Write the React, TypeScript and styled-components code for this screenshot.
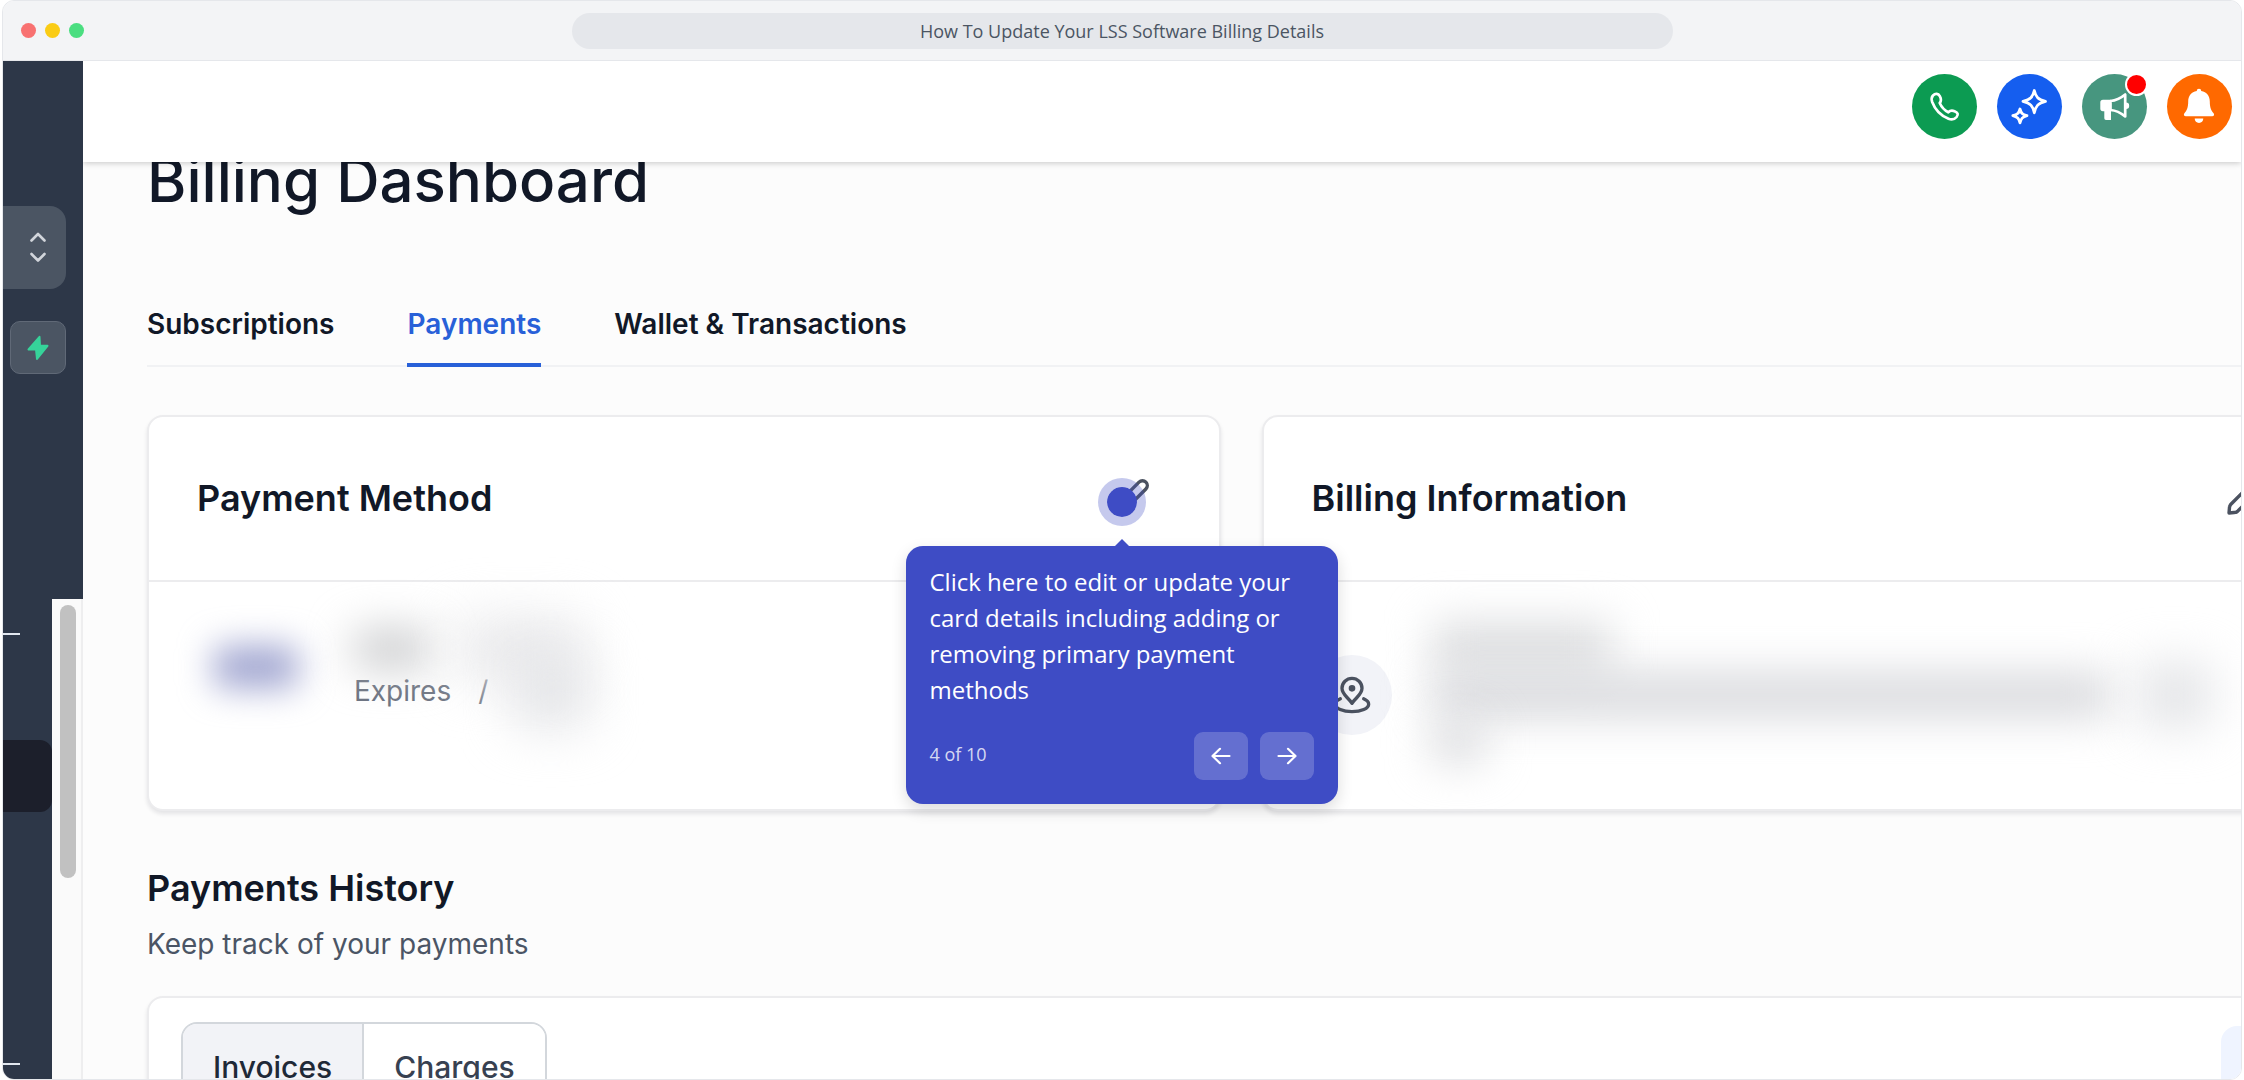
import React from "react";
import styled, { createGlobalStyle } from "styled-components";

const GlobalStyle = createGlobalStyle`
  *, *::before, *::after { box-sizing: border-box; }
  body { margin: 0; background: #ffffff; }
  button { font: inherit; color: inherit; padding: 0; border: 0; background: none; cursor: pointer; }
  h1, h2, p { margin: 0; }
  svg { display: block; flex: none; }
`;

const inter = `Inter, "Liberation Sans", sans-serif`;
const openSans = `"Open Sans", "Noto Sans", sans-serif`;

/* ---------- browser frame ---------- */

const Frame = styled.div`
  display: flex;
  flex-direction: column;
  height: 100vh;
  margin: 0 2px;
  border: 1px solid #e5e7eb;
  border-radius: 12px;
  overflow: hidden;
  background: #fcfcfc;
  color: #111827;
  font-family: ${inter};
`;

const TitleBar = styled.header`
  display: grid;
  grid-template-columns: 1fr 2fr 1fr;
  align-items: center;
  flex: none;
  height: 60px;
  padding: 0 18px;
  background: #f3f4f6;
  border-bottom: 1px solid #e5e7eb;
`;

const Dots = styled.div`
  display: flex;
  gap: 9px;
`;

const Dot = styled.span<{ $color: string }>`
  width: 15px;
  height: 15px;
  border-radius: 50%;
  background: ${(p) => p.$color};
`;

const AddressPill = styled.div`
  height: 36px;
  border-radius: 18px;
  background: #e5e7eb;
  color: #4b5563;
  font: 400 18px/36px ${openSans};
  text-align: center;
`;

const Body = styled.div`
  display: flex;
  flex: 1;
  min-height: 0;
`;

/* ---------- sidebar ---------- */

const Sidebar = styled.aside`
  display: flex;
  flex-direction: column;
  flex: none;
  width: 80px;
  background: #2d3748;
`;

const SidebarTop = styled.div`
  display: flex;
  flex-direction: column;
  flex: none;
  align-items: flex-start;
  gap: 32px;
  height: 538px;
  padding-top: 145px;
`;

const AccountSwitcher = styled.button`
  display: flex;
  justify-content: flex-end;
  align-items: center;
  width: 63px;
  height: 83px;
  padding-right: 20px;
  border-radius: 0 16px 16px 0;
  background: #4b5563;
`;

const QuickAction = styled.button`
  display: grid;
  place-items: center;
  width: 56px;
  height: 53px;
  margin-left: 7px;
  border: 1px solid #606977;
  border-radius: 10px;
  background: #4b5563;
`;

const SidebarScroll = styled.div`
  display: flex;
  flex: 1;
  min-height: 0;
`;

const SidebarNav = styled.nav`
  flex: 1;
  padding-top: 34px;
  overflow: hidden;
`;

const Separator = styled.hr`
  width: 17px;
  height: 2px;
  margin: 0;
  border: 0;
  background: #e2e8f0;
`;

const ActiveItem = styled.a`
  display: block;
  height: 72px;
  margin: 105px 0 251px;
  border-radius: 0 12px 12px 0;
  background: #1c1f2b;
`;

const ScrollTrack = styled.div`
  flex: none;
  width: 31px;
  padding: 6px 0 0 8px;
  background: #fafafa;
  border-right: 2px solid #eeeeef;
`;

const ScrollThumb = styled.div`
  width: 16px;
  height: 273px;
  border-radius: 8px;
  background: #c1c1c1;
`;

/* ---------- main column ---------- */

const Main = styled.main`
  display: flex;
  flex-direction: column;
  flex: 1;
  min-width: 0;
  overflow: hidden;
`;

const TopBar = styled.div`
  position: relative;
  z-index: 1;
  display: flex;
  flex: none;
  justify-content: flex-end;
  gap: 20px;
  height: 101px;
  padding: 13px 9px 0;
  background: #ffffff;
  box-shadow: 0 1px 6px rgba(0, 0, 0, 0.22);
`;

const RoundButton = styled.button<{ $color: string }>`
  position: relative;
  width: 65px;
  height: 65px;
  border-radius: 50%;
  background: ${(p) => p.$color};
`;

const Badge = styled.span`
  position: absolute;
  top: -1px;
  right: -1px;
  width: 23px;
  height: 23px;
  border: 2px solid #ffffff;
  border-radius: 50%;
  background: #ff0000;
`;

/* The dashboard runs past the right edge and is scrolled slightly under the top bar. */
const Content = styled.div`
  flex: 1;
  margin: -18px -94px 0 64px;
`;

const PageTitle = styled.h1`
  font-size: 60px;
  line-height: 72px;
  font-weight: 500;
`;

const Tabs = styled.nav`
  display: flex;
  gap: 73px;
  margin: 88px 0 48px;
  border-bottom: 2px solid #f1f2f4;
`;

const Tab = styled.a<{ $active?: boolean }>`
  margin-bottom: -2px;
  padding-bottom: 19px;
  border-bottom: 4px solid ${(p) => (p.$active ? "#2860d8" : "transparent")};
  color: ${(p) => (p.$active ? "#2860d8" : "#111827")};
  font-size: 28px;
  line-height: 40px;
  font-weight: 600;
  text-decoration: none;
`;

const CardGrid = styled.div`
  display: grid;
  grid-template-columns: 1fr 1fr;
  gap: 41px;
`;

const Card = styled.section`
  border: 2px solid #ececee;
  border-radius: 16px;
  background: #ffffff;
  box-shadow: 0 3px 4px rgba(16, 24, 40, 0.1);
`;

const CardHeader = styled.div`
  display: flex;
  justify-content: space-between;
  align-items: center;
  height: 165px;
  padding: 0 68px 2px 48px;
  border-bottom: 2px solid #ececee;
`;

const SectionTitle = styled.h2`
  font-size: 36px;
  line-height: 48px;
  font-weight: 600;
`;

const CardBody = styled.div`
  display: flex;
  align-items: flex-start;
  gap: 40px;
  padding: 47px 48px 49px;
`;

const Lines = styled.div<{ $gap: number }>`
  display: flex;
  flex-direction: column;
  flex: 1;
  gap: ${(p) => p.$gap}px;
`;

const Line = styled.div`
  display: flex;
  align-items: center;
  gap: 27px;
  height: 40px;
  color: #6b7280;
  font-size: 28px;
`;

const AddressLine = styled(Line)`
  height: 37px;
`;

/* A value hidden behind a strong blur. */
const Redacted = styled.span<{ $w: number; $h: number; $color: string; $blur?: number }>`
  flex: none;
  width: ${(p) => p.$w}px;
  height: ${(p) => p.$h}px;
  border-radius: 8px;
  background: ${(p) => p.$color};
  filter: blur(${(p) => p.$blur ?? 22}px);
`;

const BrandSlot = styled.div`
  display: grid;
  place-items: center;
  width: 117px;
  height: 76px;
`;

const PinCircle = styled.div`
  display: grid;
  place-items: center;
  align-self: center;
  flex: none;
  width: 80px;
  height: 80px;
  border-radius: 50%;
  background: #f2f3f8;
`;

/* ---------- guided tour ---------- */

const EditSpot = styled.div`
  position: relative;
`;

const EditButton = styled.button`
  display: block;
  color: #4b5260;
`;

const Halo = styled.span`
  position: absolute;
  top: 1px;
  left: -12px;
  width: 48px;
  height: 48px;
  border: 9px solid rgba(62, 76, 197, 0.3);
  border-radius: 50%;
  background: #3e4cc5;
  background-clip: padding-box;
`;

const Tour = styled.div`
  position: absolute;
  z-index: 2;
  top: 69px;
  left: 12px;
  width: 432px;
  margin-left: -216px;
  padding: 18px 24px 24px;
  border-radius: 17px;
  background: #3e4cc5;
  color: #ffffff;
  font-family: ${openSans};
  box-shadow: 0 6px 16px rgba(0, 0, 0, 0.14);

  &::before {
    content: "";
    position: absolute;
    bottom: 100%;
    left: 50%;
    margin-left: -7px;
    border: 7px solid transparent;
    border-top-width: 0;
    border-bottom-color: #3e4cc5;
  }
`;

const TourText = styled.p`
  font-size: 24px;
  line-height: 36px;
`;

const TourFooter = styled.div`
  display: flex;
  align-items: center;
  gap: 12px;
  margin-top: 24px;
`;

const TourCount = styled.span`
  flex: 1;
  padding-bottom: 4px;
  color: rgba(255, 255, 255, 0.8);
  font-size: 18px;
  line-height: 24px;
`;

const TourButton = styled.button`
  display: grid;
  place-items: center;
  width: 54px;
  height: 48px;
  border-radius: 9px;
  background: rgba(255, 255, 255, 0.2);
`;

/* ---------- payments history ---------- */

const HistoryHeader = styled.div`
  display: flex;
  flex-direction: column;
  gap: 12px;
  margin: 53px 0 32px;
`;

const Subtitle = styled.p`
  color: #4b5565;
  font-size: 28px;
  line-height: 40px;
`;

const HistoryBar = styled.div`
  display: flex;
  justify-content: space-between;
  padding: 24px 32px;
`;

const Segmented = styled.div`
  display: flex;
  border: 2px solid #d3d7dc;
  border-radius: 16px;
  overflow: hidden;
`;

const Segment = styled.button<{ $active?: boolean }>`
  padding: 23px 30px;
  background: ${(p) => (p.$active ? "#f2f3f7" : "#ffffff")};
  color: ${(p) => (p.$active ? "#1f2937" : "#374151")};
  font-size: 30px;
  line-height: 40px;
  font-weight: 500;

  & + & {
    border-left: 2px solid #d3d7dc;
  }
`;

const FilterButton = styled.button`
  width: 80px;
  margin-top: 4px;
  border-radius: 16px;
  background: #eff4ff;
`;

/* ---------- icons ---------- */

const PhoneIcon = () => (
  <svg width="65" height="65" viewBox="0 0 65 65" fill="none" stroke="#fff" strokeWidth="2.7" strokeLinejoin="round">
    <path d="M21 21.5C23.3 19.2 26.3 19.4 27.8 22.2C29.4 25.2 29.6 27 27.7 29C29.5 33 32.5 36.3 36.3 38.3C38.3 36.2 39.8 36.1 42.5 37.2C46 38.6 46.6 40.5 44.6 43C42.5 45.5 39.5 46 36.5 44.8C28.5 41.5 23 35.5 20.2 28C19.2 25 19.2 23.3 21 21.5Z" />
  </svg>
);

const SparklesIcon = () => (
  <svg width="65" height="65" viewBox="0 0 65 65" fill="none" stroke="#fff" strokeWidth="2.8" strokeLinejoin="round">
    <path d="M37.3 16.5C38.9 23.2 41 25.4 48.5 27.3C41 29.2 38.9 31.8 37.3 38.8C35.7 31.8 33.5 29.2 26 27.3C33.5 25.4 35.7 23.2 37.3 16.5Z" />
    <path d="M23 35C24.2 39.2 25.3 40.5 30 41.7C25.3 42.9 24.2 44.5 23 48.8C21.8 44.5 20.5 42.9 15.8 41.7C20.5 40.5 21.8 39.2 23 35Z" />
  </svg>
);

const MegaphoneIcon = () => (
  <svg width="65" height="65" viewBox="0 0 65 65" fill="none">
    <path d="M21 25.7H29V46H24Q22.3 46 22.3 44.3V37.3H21Q18.3 37.3 18.3 34.6V28.4Q18.3 25.7 21 25.7Z" fill="#fff" />
    <path d="M28.5 27C34.5 26.5 39 24 43.2 20.5V42.5C39 39 34.5 36.5 28.5 36Z" stroke="#fff" strokeWidth="2.7" strokeLinejoin="round" />
    <path d="M44 28.5A3.2 3.2 0 0 1 44 34.9Z" fill="#fff" />
  </svg>
);

const BellIcon = () => (
  <svg width="65" height="65" viewBox="0 0 65 65" fill="#fff">
    <path d="M32 14.8C33.3 14.8 34.2 15.7 34.2 17C39.8 18 42.8 22 42.8 27.5C42.8 33.8 44.3 36.6 46.6 39.2C47.7 40.5 47 42.3 45.2 42.3H18.8C17 42.3 16.3 40.5 17.4 39.2C19.7 36.6 21.2 33.8 21.2 27.5C21.2 22 24.2 18 29.8 17C29.8 15.7 30.7 14.8 32 14.8Z" />
    <path d="M27.7 44.6H36.3C36.3 47.2 34.5 49 32 49C29.5 49 27.7 47.2 27.7 44.6Z" />
  </svg>
);

const SelectorIcon = () => (
  <svg width="16" height="31" viewBox="0 0 16 31" fill="none" stroke="#d1d5db" strokeWidth="2.6" strokeLinecap="round" strokeLinejoin="round">
    <path d="M1.5 8.5L8 2L14.5 8.5M1.5 22L8 28.5L14.5 22" />
  </svg>
);

const BoltIcon = () => (
  <svg width="22" height="26" viewBox="0 0 22 26" fill="#36d39a" stroke="#36d39a" strokeWidth="2" strokeLinejoin="round">
    <path d="M12.5 1.8L1.5 14.5H9L10 24L20.5 10.8H13Z" />
  </svg>
);

const PencilIcon = () => (
  <svg width="41" height="41" viewBox="0 0 24 24" fill="none" stroke="currentColor" strokeWidth="2" strokeLinecap="round" strokeLinejoin="round">
    <path d="M3.2 17.9C3.24 17.6 3.26 17.45 3.31 17.3C3.36 17.13 3.42 16.968 3.5 16.817C3.6 16.648 3.7 16.5 3.9 16.1L17 3C18.105 1.895 19.895 1.895 21 3C22.105 4.105 22.105 5.895 21 7L7.9 20.1C7.5 20.4 7.352 20.5 7.183 20.56C7.032 20.63 6.869 20.68 6.698 20.72C6.505 20.76 6.298 20.78 5.884 20.82L2.95 21.05L3.2 17.9Z" />
  </svg>
);

const MapPinIcon = () => (
  <svg width="40" height="40" viewBox="0 0 24 24" fill="none" stroke="#4b5260" strokeWidth="2" strokeLinecap="round" strokeLinejoin="round">
    <path d="M5 14.286C3.149 15.103 2 16.241 2 17.5C2 19.985 6.477 22 12 22C17.523 22 22 19.985 22 17.5C22 16.241 20.851 15.103 19 14.286" />
    <path d="M18 8C18 11.8 14.3 13.4 12 17C9.7 13.4 6 11.8 6 8C6 4.686 8.686 2 12 2C15.314 2 18 4.686 18 8Z" />
    <circle cx="12" cy="8" r="1" />
  </svg>
);

const ArrowIcon = ({ flip = false }: { flip?: boolean }) => (
  <svg width="20" height="18" viewBox="0 0 20 18" fill="none" stroke="#fff" strokeWidth="2.2" strokeLinecap="round" strokeLinejoin="round">
    <path d={flip ? "M1.5 9H18.5M11 1.8L18.5 9L11 16.2" : "M18.5 9H1.5M9 1.8L1.5 9L9 16.2"} />
  </svg>
);

export default function App() {
  return (
    <>
      <GlobalStyle />
      <Frame>
        <TitleBar>
          <Dots>
            <Dot $color="#f87171" />
            <Dot $color="#facc15" />
            <Dot $color="#4ade80" />
          </Dots>
          <AddressPill>How To Update Your LSS Software Billing Details</AddressPill>
        </TitleBar>
        <Body>
          <Sidebar>
            <SidebarTop>
              <AccountSwitcher aria-label="Switch account">
                <SelectorIcon />
              </AccountSwitcher>
              <QuickAction aria-label="Quick actions">
                <BoltIcon />
              </QuickAction>
            </SidebarTop>
            <SidebarScroll>
              <SidebarNav>
                <Separator />
                <ActiveItem href="#billing" aria-label="Billing" />
                <Separator />
              </SidebarNav>
              <ScrollTrack>
                <ScrollThumb />
              </ScrollTrack>
            </SidebarScroll>
          </Sidebar>
          <Main>
            <TopBar>
              <RoundButton $color="#0c9b52" aria-label="Call">
                <PhoneIcon />
              </RoundButton>
              <RoundButton $color="#155eef" aria-label="Assistant">
                <SparklesIcon />
              </RoundButton>
              <RoundButton $color="#47967f" aria-label="Announcements">
                <MegaphoneIcon />
                <Badge />
              </RoundButton>
              <RoundButton $color="#ff6900" aria-label="Notifications">
                <BellIcon />
              </RoundButton>
            </TopBar>
            <Content>
              <PageTitle>Billing Dashboard</PageTitle>
              <Tabs>
                <Tab href="#subscriptions">Subscriptions</Tab>
                <Tab href="#payments" $active>
                  Payments
                </Tab>
                <Tab href="#wallet">Wallet &amp; Transactions</Tab>
              </Tabs>
              <CardGrid>
                <Card>
                  <CardHeader>
                    <SectionTitle>Payment Method</SectionTitle>
                    <EditSpot>
                      <EditButton aria-label="Edit payment method">
                        <PencilIcon />
                      </EditButton>
                      <Halo />
                      <Tour role="dialog" aria-label="Tour step">
                        <TourText>
                          Click here to edit or update your card details including adding or removing primary payment
                          methods
                        </TourText>
                        <TourFooter>
                          <TourCount>4 of 10</TourCount>
                          <TourButton aria-label="Previous step">
                            <ArrowIcon />
                          </TourButton>
                          <TourButton aria-label="Next step">
                            <ArrowIcon flip />
                          </TourButton>
                        </TourFooter>
                      </Tour>
                    </EditSpot>
                  </CardHeader>
                  <CardBody>
                    <BrandSlot>
                      <Redacted $w={84} $h={42} $color="#a0a5d0" $blur={17} />
                    </BrandSlot>
                    <Lines $gap={2}>
                      <Line>
                        <Redacted $w={76} $h={36} $color="#c6c7c9" />
                        <Redacted $w={124} $h={60} $color="#e9e9eb" $blur={26} />
                      </Line>
                      <Line>
                        <span>Expires</span>
                        <span>/</span>
                        <Redacted $w={72} $h={70} $color="#e2e3e6" $blur={26} />
                      </Line>
                    </Lines>
                  </CardBody>
                </Card>
                <Card>
                  <CardHeader>
                    <SectionTitle>Billing Information</SectionTitle>
                    <EditButton aria-label="Edit billing information">
                      <PencilIcon />
                    </EditButton>
                  </CardHeader>
                  <CardBody>
                    <PinCircle>
                      <MapPinIcon />
                    </PinCircle>
                    <Lines $gap={10}>
                      <AddressLine>
                        <Redacted $w={180} $h={52} $color="#dddee0" />
                      </AddressLine>
                      <AddressLine>
                        <Redacted $w={680} $h={42} $color="#d6d7db" />
                        <Redacted $w={72} $h={64} $color="#e3e4e7" $blur={24} />
                      </AddressLine>
                      <AddressLine>
                        <Redacted $w={52} $h={40} $color="#d9dadd" />
                      </AddressLine>
                    </Lines>
                  </CardBody>
                </Card>
              </CardGrid>
              <HistoryHeader>
                <SectionTitle>Payments History</SectionTitle>
                <Subtitle>Keep track of your payments</Subtitle>
              </HistoryHeader>
              <Card>
                <HistoryBar>
                  <Segmented>
                    <Segment $active>Invoices</Segment>
                    <Segment>Charges</Segment>
                  </Segmented>
                  <FilterButton aria-label="Filter" />
                </HistoryBar>
              </Card>
            </Content>
          </Main>
        </Body>
      </Frame>
    </>
  );
}
